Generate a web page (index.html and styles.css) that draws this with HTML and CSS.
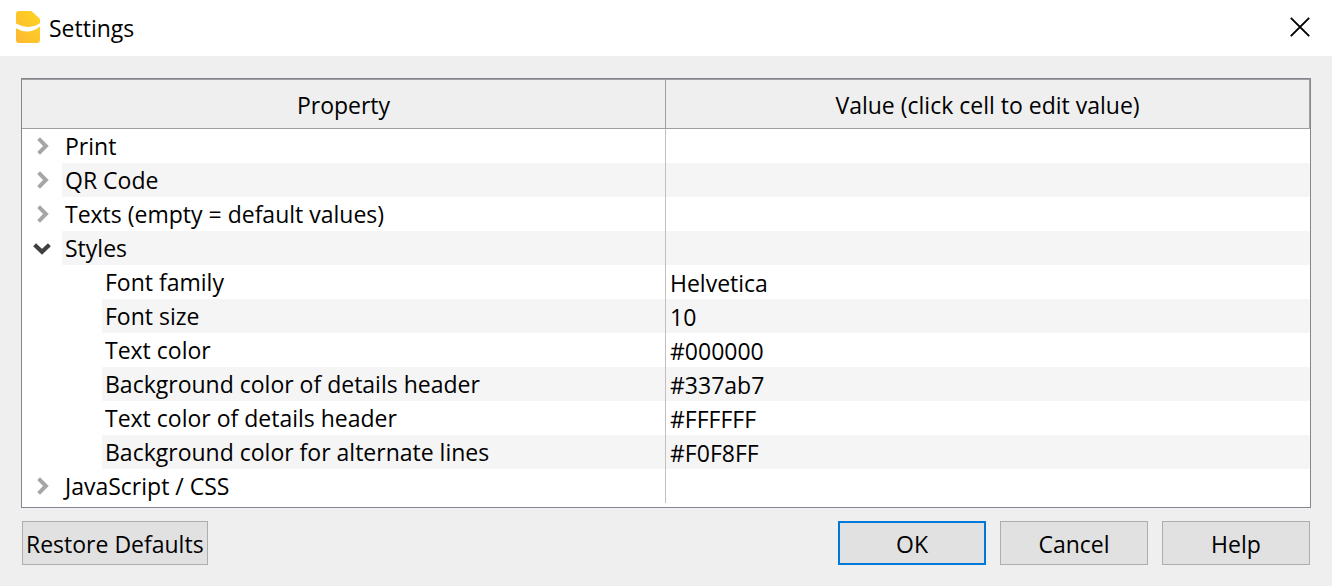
FILE: index.html
```html
<!DOCTYPE html>
<html lang="en">
<head>
<meta charset="utf-8">
<meta name="viewport" content="width=device-width, initial-scale=1">
<title>Settings</title>
<link rel="stylesheet" href="styles.css">
</head>
<body>
<svg width="0" height="0" class="sprite" aria-hidden="true">
  <symbol id="chevron-right" viewBox="0 0 18 18"><path d="M5.6 1.6 L12.9 9 L5.6 16.4" fill="none" stroke="#a6a6a6" stroke-width="4"/></symbol>
  <symbol id="chevron-down" viewBox="0 0 18 18"><path d="M1.6 5.8 L9 12.8 L16.4 5.8" fill="none" stroke="#404040" stroke-width="4.2"/></symbol>
</svg>
<main class="dialog">
  <header class="titlebar">
    <svg class="app-icon" viewBox="0 0 24 32" aria-hidden="true">
      <defs><linearGradient id="gold" x1="0" y1="1" x2="1" y2="0"><stop offset="0" stop-color="#fdb833"/><stop offset="1" stop-color="#fdd420"/></linearGradient></defs>
      <path d="M3 0H15.5L24 8V29Q24 32 21 32H3Q0 32 0 29V3Q0 0 3 0Z" fill="url(#gold)"/>
      <path d="M0 12.6Q12 19.5 24 12.2V15.4Q12.5 24.6 0 17.2Z" fill="#fff"/>
    </svg>
    <h1 class="title">Settings</h1>
    <button class="close" type="button" aria-label="Close">
      <svg viewBox="0 0 20 20" aria-hidden="true"><path d="M0.8 0.8L19.2 19.2M19.2 0.8L0.8 19.2" stroke="#000" stroke-width="1.9" fill="none"/></svg>
    </button>
  </header>
  <section class="content">
    <div class="tree">
      <table class="grid">
        <thead>
          <tr><th scope="col">Property</th><th scope="col">Value (click cell to edit value)</th></tr>
        </thead>
        <tbody>
          <tr><td><div class="prop"><button class="toggle" type="button" aria-label="Expand Print" aria-expanded="false"><svg><use href="#chevron-right"/></svg></button><span class="label">Print</span></div></td><td></td></tr>
          <tr><td><div class="prop"><button class="toggle" type="button" aria-label="Expand QR Code" aria-expanded="false"><svg><use href="#chevron-right"/></svg></button><span class="label">QR Code</span></div></td><td></td></tr>
          <tr><td><div class="prop"><button class="toggle" type="button" aria-label="Expand Texts" aria-expanded="false"><svg><use href="#chevron-right"/></svg></button><span class="label">Texts (empty = default values)</span></div></td><td></td></tr>
          <tr><td><div class="prop"><button class="toggle" type="button" aria-label="Collapse Styles" aria-expanded="true"><svg><use href="#chevron-down"/></svg></button><span class="label">Styles</span></div></td><td></td></tr>
          <tr><td><div class="prop child"><span class="label">Font family</span></div></td><td>Helvetica</td></tr>
          <tr><td><div class="prop child"><span class="label">Font size</span></div></td><td>10</td></tr>
          <tr><td><div class="prop child"><span class="label">Text color</span></div></td><td>#000000</td></tr>
          <tr><td><div class="prop child"><span class="label">Background color of details header</span></div></td><td>#337ab7</td></tr>
          <tr><td><div class="prop child"><span class="label">Text color of details header</span></div></td><td>#FFFFFF</td></tr>
          <tr><td><div class="prop child"><span class="label">Background color for alternate lines</span></div></td><td>#F0F8FF</td></tr>
          <tr><td><div class="prop"><button class="toggle" type="button" aria-label="Expand JavaScript / CSS" aria-expanded="false"><svg><use href="#chevron-right"/></svg></button><span class="label">JavaScript / CSS</span></div></td><td></td></tr>
        </tbody>
      </table>
    </div>
    <footer class="actions">
      <button class="btn restore" type="button">Restore Defaults</button>
      <button class="btn primary" type="button">OK</button>
      <button class="btn" type="button">Cancel</button>
      <button class="btn" type="button">Help</button>
    </footer>
  </section>
</main>
</body>
</html>
```
FILE: styles.css
```css
* { box-sizing: border-box; }

body {
  margin: 0;
  background: #efefef;
  color: #000;
  font: 23px/34px "Segoe UI", "Open Sans", "Noto Sans", sans-serif;
}

button { font: inherit; color: inherit; margin: 0; padding: 0; }

.sprite { display: none; }

.titlebar {
  display: flex;
  align-items: center;
  gap: 9px;
  height: 56px;
  padding: 0 22px 2px 16px;
  background: #fff;
}
.app-icon { width: 24px; height: 32px; }
.title { flex: 1; margin: 0; padding-top: 1px; font-size: 23px; font-weight: 400; }
.close { display: flex; padding: 0; border: 0; background: none; width: 20px; height: 20px; }
.close svg { width: 20px; height: 20px; }

.content { padding: 22px 21px 21px; }

.tree {
  padding-bottom: 4px;
  border: 1px solid #828790;
  background: #fff;
}
.grid { width: 100%; table-layout: fixed; border-collapse: separate; border-spacing: 0; }
.grid th {
  height: 50px;
  padding: 1px 0 0;
  border: solid #a0a0a0;
  border-width: 1px 1px 1px 0;
  background: #efefef;
  font-weight: 400;
}
.grid td { height: 34px; padding: 0; white-space: nowrap; }
.grid td:first-child { border-right: 1px solid #c0c0c0; }
.grid td:last-child { padding: 2px 0 0 4px; line-height: 32px; }

.prop { display: flex; height: 34px; }
.prop.child { padding-left: 80px; }
.label { flex: 1; padding-left: 3px; }
tbody tr:nth-child(even) .label,
tbody tr:nth-child(even) td:last-child { background: #f5f5f5; }

.toggle {
  display: flex;
  align-items: center;
  justify-content: center;
  width: 40px;
  border: 0;
  background: none;
}
.toggle svg { width: 18px; height: 18px; }

.actions { display: flex; gap: 14px; padding: 13px 1px 0; }
.btn {
  width: 148px;
  height: 44px;
  padding-top: 1px;
  border: 1px solid #adadad;
  background: #e1e1e1;
}
.btn.restore { width: auto; padding: 1px 3px 0; margin-right: auto; }
.btn.primary { border: 2px solid #0078d7; }
```
